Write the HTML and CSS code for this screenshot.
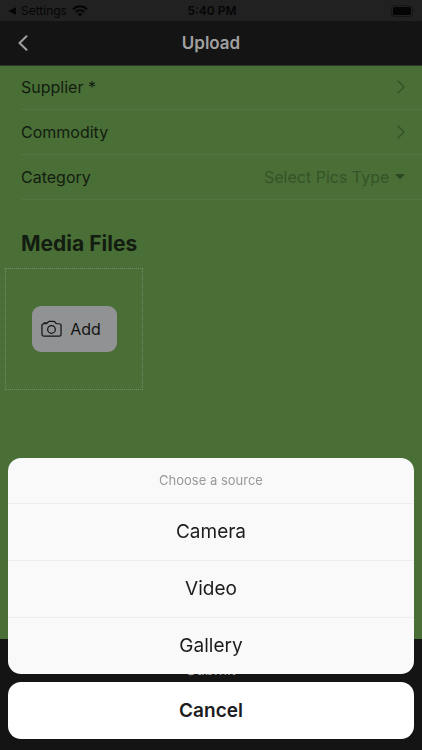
FILE: index.html
```html
<!DOCTYPE html>
<html lang="en">
<head>
<meta charset="utf-8">
<meta name="viewport" content="width=device-width, initial-scale=1">
<title>Upload</title>
<link rel="stylesheet" href="styles.css">
</head>
<body>
<div class="screen">
  <div class="status">
    <div class="status-left">
      <svg class="back-mark" viewBox="0 0 8 8" aria-hidden="true"><path d="M0 4 8 0.300V7.700Z"/></svg>
      <span>Settings</span>
      <svg class="wifi" viewBox="0 0 16 12" aria-hidden="true"><path class="arc" d="M1.200 4.200C5 .4 11 .4 14.800 4.200M3.800 7C6.200 4.700 9.800 4.700 12.200 7"/><path d="M5.700 8.900C7 7.700 9 7.700 10.300 8.900L8 11.400Z"/></svg>
    </div>
    <span class="clock">5:40 PM</span>
    <div class="status-right">
      <svg class="battery" viewBox="0 0 25 12" aria-hidden="true"><rect class="shell" x=".5" y=".5" width="21" height="11" rx="3"/><rect x="2" y="2" width="18" height="8" rx="1.500"/><path class="tip" d="M23 4q1.500 2 0 4Z"/></svg>
    </div>
  </div>
  <header class="bar">
    <button class="back" type="button" aria-label="Back"><svg viewBox="0 0 10 16" aria-hidden="true"><path d="M8.500 1.200 1.500 8l7 6.800"/></svg></button>
    <h1>Upload</h1>
  </header>
  <main>
    <a class="row" href="#supplier"><span>Supplier *</span><svg class="chevron" viewBox="0 0 8 14" aria-hidden="true"><path d="M1 1l6 6-6 6"/></svg></a>
    <a class="row" href="#commodity"><span>Commodity</span><svg class="chevron" viewBox="0 0 8 14" aria-hidden="true"><path d="M1 1l6 6-6 6"/></svg></a>
    <div class="row">
      <label for="category">Category</label>
      <div class="picker">
        <select id="category"><option>Select Pics Type</option></select>
        <svg class="caret" viewBox="0 0 10 6" aria-hidden="true"><path d="M0 0h10L5 5.500Z"/></svg>
      </div>
    </div>
    <h2>Media Files</h2>
    <div class="drop">
      <button class="add" type="button">
        <svg viewBox="0 0 22 18" aria-hidden="true"><path d="M3 3.500h2.200c.7 0 1.100-.3 1.500-.9l.6-.9C7.700 1.200 8.100 1 8.700 1h4.600c.6 0 1 .2 1.400.7l.6.9c.4.600.8.9 1.500.9H19A2 2 0 0 1 21 5.500v9A2 2 0 0 1 19 16.500H3A2 2 0 0 1 1 14.500v-9A2 2 0 0 1 3 3.500Z"/><circle cx="11" cy="9.500" r="4"/><path d="M3.400 3.400V2.500h1.800v.9"/></svg>
        <span>Add</span>
      </button>
    </div>
  </main>
  <footer><button class="submit" type="button">Submit</button></footer>
</div>
<div class="backdrop" role="dialog" aria-modal="true" aria-labelledby="sheet-title">
  <div class="sheet">
    <h2 id="sheet-title">Choose a source</h2>
    <button type="button">Camera</button>
    <button type="button">Video</button>
    <button type="button">Gallery</button>
  </div>
  <button class="cancel" type="button">Cancel</button>
</div>
</body>
</html>
```
FILE: styles.css
```css
* { box-sizing: border-box; }

body {
  margin: 0;
  background: #141414;
  color: #131c10;
  font: 16px/24px Inter, "Liberation Sans", sans-serif;
}

button, select { font: inherit; color: inherit; border: 0; padding: 0; background: none; }
h1, h2 { margin: 0; }
svg { display: block; flex: none; }

.screen { display: flex; flex-direction: column; min-height: 100vh; }

.status {
  display: grid;
  grid-template-columns: 1fr auto 1fr;
  align-items: center;
  height: 21px;
  padding: 0 6px 0 8px;
  background: #212121;
  color: #050505;
  fill: #050505;
  font-size: 12px;
  line-height: 20px;
}
.status-left { display: flex; align-items: center; gap: 5px; }
.status-right { display: flex; justify-content: flex-end; }
.clock { font-weight: 600; }
.back-mark { width: 8px; height: 8px; }
.wifi { width: 16px; height: 12px; }
.arc { fill: none; stroke: #050505; stroke-width: 2; }
.battery { width: 25px; height: 12px; }
.shell { fill: none; stroke: #151515; }
.tip { fill: #151515; }

.bar {
  display: grid;
  grid-template-columns: 1fr auto 1fr;
  align-items: center;
  height: 44px;
  padding: 0 18px;
  background: #141414;
  color: #a0a0a0;
}
.bar h1 { font-size: 17px; font-weight: 600; }
.back { justify-self: start; }
.back svg { width: 10px; height: 16px; fill: none; stroke: #a0a0a0; stroke-width: 2; stroke-linecap: round; stroke-linejoin: round; }

main { flex: 1; background: #496f36; box-shadow: inset 0 1px #2c3727; }
.row {
  display: flex;
  align-items: center;
  justify-content: space-between;
  height: 45px;
  margin-left: 21px;
  padding-right: 17px;
  border-bottom: 1px solid #53753f;
  color: inherit;
  text-decoration: none;
}
.chevron { width: 8px; height: 14px; fill: none; stroke: #365328; stroke-width: 1.5; stroke-linecap: round; stroke-linejoin: round; }
.picker { display: flex; align-items: center; gap: 5px; color: #365328; }
.picker select { appearance: none; }
.caret { width: 10px; height: 6px; fill: #2f4a22; }
main h2 { margin: 31px 21px 11px; font-size: 21px; line-height: 26px; font-weight: 700; }

.drop {
  display: flex;
  align-items: center;
  justify-content: center;
  width: 138px;
  height: 122px;
  margin-left: 5px;
  border: 1px dotted #73896a;
}
.add {
  display: flex;
  align-items: center;
  justify-content: center;
  gap: 8px;
  width: 85px;
  height: 46px;
  padding-right: 6px;
  border-radius: 9px;
  background: #919293;
  color: #141414;
}
.add svg { width: 21px; height: 18px; fill: none; stroke: #141414; stroke-width: 1.3; }

footer { display: flex; justify-content: center; height: 111px; padding-top: 19px; background: #141414; }
.submit { height: 24px; color: #a0a0a0; font-size: 15px; }

.backdrop {
  position: fixed;
  inset: 0;
  display: flex;
  flex-direction: column;
  justify-content: flex-end;
  gap: 8px;
  padding: 0 8px 11px;
  color: #1c1c1e;
}
.sheet { border-radius: 13px; overflow: hidden; background: #f9f9f9; }
.sheet h2 { color: #999; font-size: 13px; line-height: 45px; font-weight: 400; text-align: center; }
.sheet button { display: block; width: 100%; height: 57px; border-top: 1px solid #ededed; font-size: 19px; }
.cancel { height: 57px; border-radius: 13px; background: #fff; font-size: 19px; font-weight: 600; }
```
